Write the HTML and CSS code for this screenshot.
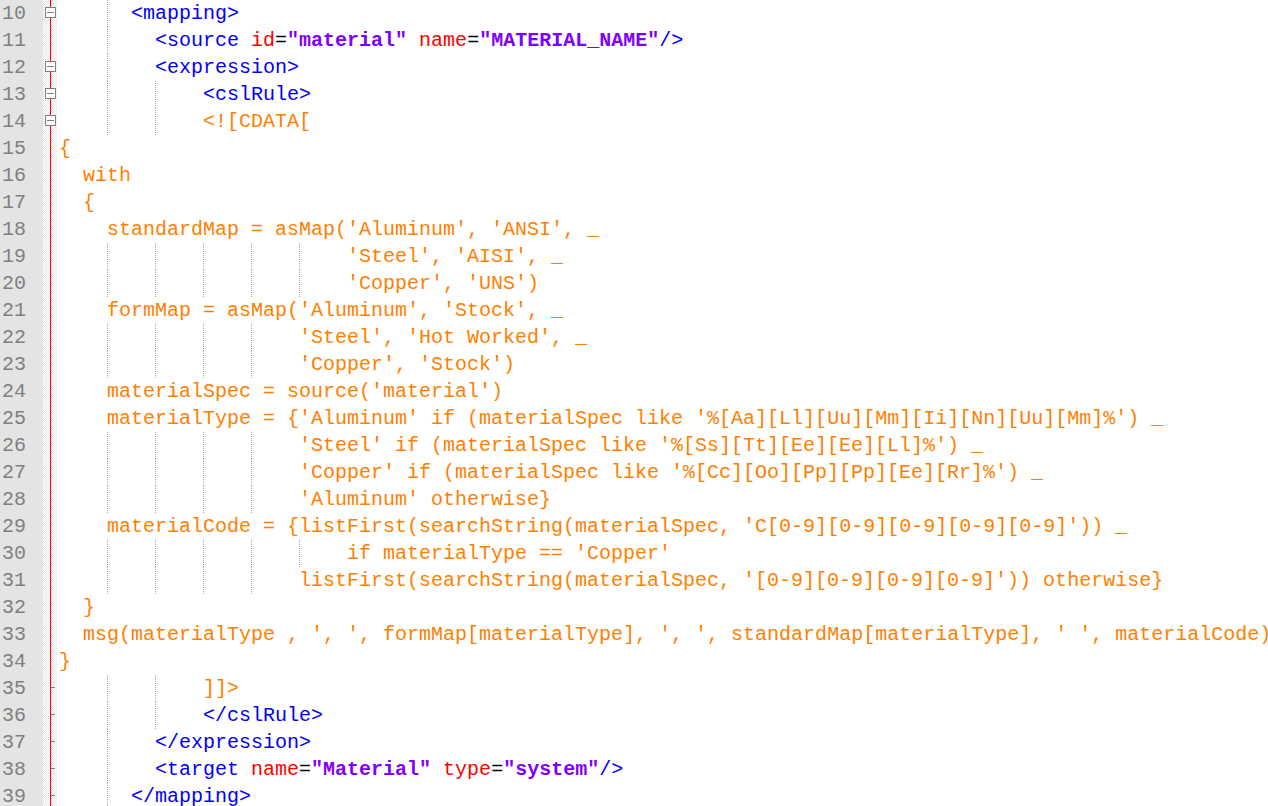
FILE: index.html
```html
<!DOCTYPE html>
<html>
<head>
<meta charset="utf-8">
<link rel="stylesheet" href="styles.css">
</head>
<body>
<div class="editor">
<div class="ln"><span class="num">10</span><span class="fold"><span class="box"></span></span><span class="code"><span class="i"></span><span class="g g2"></span><span class="tag">&lt;mapping&gt;</span></span></div>
<div class="ln"><span class="num">11</span><span class="fold"></span><span class="code"><span class="i"></span><span class="g"></span><span class="tag">&lt;source</span> <span class="attr">id</span>=<span class="val">"material"</span> <span class="attr">name</span>=<span class="val">"MATERIAL_NAME"</span><span class="tag">/&gt;</span></span></div>
<div class="ln"><span class="num">12</span><span class="fold"><span class="box"></span></span><span class="code"><span class="i"></span><span class="g"></span><span class="tag">&lt;expression&gt;</span></span></div>
<div class="ln"><span class="num">13</span><span class="fold"><span class="box"></span></span><span class="code"><span class="i"></span><span class="g"></span><span class="g"></span><span class="tag">&lt;cslRule&gt;</span></span></div>
<div class="ln"><span class="num">14</span><span class="fold"><span class="box"></span></span><span class="code"><span class="i"></span><span class="g"></span><span class="g"></span><span class="cd">&lt;![CDATA[</span></span></div>
<div class="ln"><span class="num">15</span><span class="fold"></span><span class="code cd">{</span></div>
<div class="ln"><span class="num">16</span><span class="fold"></span><span class="code cd">  with</span></div>
<div class="ln"><span class="num">17</span><span class="fold"></span><span class="code cd">  {</span></div>
<div class="ln"><span class="num">18</span><span class="fold"></span><span class="code cd">    standardMap = asMap('Aluminum', 'ANSI', _</span></div>
<div class="ln"><span class="num">19</span><span class="fold"></span><span class="code cd"><span class="i"></span><span class="g"></span><span class="g"></span><span class="g"></span><span class="g"></span><span class="g"></span>'Steel', 'AISI', _</span></div>
<div class="ln"><span class="num">20</span><span class="fold"></span><span class="code cd"><span class="i"></span><span class="g"></span><span class="g"></span><span class="g"></span><span class="g"></span><span class="g"></span>'Copper', 'UNS')</span></div>
<div class="ln"><span class="num">21</span><span class="fold"></span><span class="code cd">    formMap = asMap('Aluminum', 'Stock', _</span></div>
<div class="ln"><span class="num">22</span><span class="fold"></span><span class="code cd"><span class="i"></span><span class="g"></span><span class="g"></span><span class="g"></span><span class="g"></span>'Steel', 'Hot Worked', _</span></div>
<div class="ln"><span class="num">23</span><span class="fold"></span><span class="code cd"><span class="i"></span><span class="g"></span><span class="g"></span><span class="g"></span><span class="g"></span>'Copper', 'Stock')</span></div>
<div class="ln"><span class="num">24</span><span class="fold"></span><span class="code cd">    materialSpec = source('material')</span></div>
<div class="ln"><span class="num">25</span><span class="fold"></span><span class="code cd">    materialType = {'Aluminum' if (materialSpec like '%[Aa][Ll][Uu][Mm][Ii][Nn][Uu][Mm]%') _</span></div>
<div class="ln"><span class="num">26</span><span class="fold"></span><span class="code cd"><span class="i"></span><span class="g"></span><span class="g"></span><span class="g"></span><span class="g"></span>'Steel' if (materialSpec like '%[Ss][Tt][Ee][Ee][Ll]%') _</span></div>
<div class="ln"><span class="num">27</span><span class="fold"></span><span class="code cd"><span class="i"></span><span class="g"></span><span class="g"></span><span class="g"></span><span class="g"></span>'Copper' if (materialSpec like '%[Cc][Oo][Pp][Pp][Ee][Rr]%') _</span></div>
<div class="ln"><span class="num">28</span><span class="fold"></span><span class="code cd"><span class="i"></span><span class="g"></span><span class="g"></span><span class="g"></span><span class="g"></span>'Aluminum' otherwise}</span></div>
<div class="ln"><span class="num">29</span><span class="fold"></span><span class="code cd">    materialCode = {listFirst(searchString(materialSpec, 'C[0-9][0-9][0-9][0-9][0-9]')) _</span></div>
<div class="ln"><span class="num">30</span><span class="fold"></span><span class="code cd"><span class="i"></span><span class="g"></span><span class="g"></span><span class="g"></span><span class="g"></span><span class="g"></span>if materialType == 'Copper'</span></div>
<div class="ln"><span class="num">31</span><span class="fold"></span><span class="code cd"><span class="i"></span><span class="g"></span><span class="g"></span><span class="g"></span><span class="g"></span>listFirst(searchString(materialSpec, '[0-9][0-9][0-9][0-9]')) otherwise}</span></div>
<div class="ln"><span class="num">32</span><span class="fold"></span><span class="code cd">  }</span></div>
<div class="ln"><span class="num">33</span><span class="fold"></span><span class="code cd">  msg(materialType , ', ', formMap[materialType], ', ', standardMap[materialType], ' ', materialCode)</span></div>
<div class="ln"><span class="num">34</span><span class="fold"></span><span class="code cd">}</span></div>
<div class="ln"><span class="num">35</span><span class="fold"><span class="tick"></span></span><span class="code"><span class="i"></span><span class="g"></span><span class="g"></span><span class="cd">]]&gt;</span></span></div>
<div class="ln"><span class="num">36</span><span class="fold"><span class="tick"></span></span><span class="code"><span class="i"></span><span class="g"></span><span class="g"></span><span class="tag">&lt;/cslRule&gt;</span></span></div>
<div class="ln"><span class="num">37</span><span class="fold"><span class="tick"></span></span><span class="code"><span class="i"></span><span class="g"></span><span class="tag">&lt;/expression&gt;</span></span></div>
<div class="ln"><span class="num">38</span><span class="fold"><span class="tick"></span></span><span class="code"><span class="i"></span><span class="g"></span><span class="tag">&lt;target</span> <span class="attr">name</span>=<span class="val">"Material"</span> <span class="attr">type</span>=<span class="val">"system"</span><span class="tag">/&gt;</span></span></div>
<div class="ln"><span class="num">39</span><span class="fold"><span class="tick"></span></span><span class="code"><span class="i"></span><span class="g g2"></span><span class="tag">&lt;/mapping&gt;</span></span></div>
</div>
</body>
</html>
```

FILE: styles.css
```css
html, body {
  margin: 0;
  padding: 0;
  background: #ffffff;
  overflow: hidden;
}

.editor {
  width: 1268px;
  height: 806px;
  overflow: hidden;
  font-family: "Liberation Mono", "Courier New", monospace;
  font-size: 20px;
  line-height: 27px;
}

.ln {
  display: flex;
  height: 27px;
  white-space: pre;
}

.num {
  flex: 0 0 43px;
  box-sizing: border-box;
  padding-left: 2px;
  background: #e4e4e4;
  color: #808080;
}

.fold {
  flex: 0 0 14px;
  display: flex;
  flex-direction: column;
  align-items: flex-start;
  background:
    linear-gradient(#ff0000, #ff0000) no-repeat 7px 0 / 1px 100%,
    repeating-conic-gradient(#e6e6e6 0 25%, #ffffff 0 50%) 0 0 / 2px 2px;
}

.box {
  margin: 7px 0 0 2px;
  width: 11px;
  height: 11px;
  box-sizing: border-box;
  border: 1px solid #808080;
  background: linear-gradient(#808080, #808080) no-repeat center / 7px 1px, #ffffff;
}

.tick {
  margin: 12px 0 0 8px;
  width: 4px;
  height: 1px;
  background: #808080;
}

.code {
  flex: 1 1 auto;
  padding-left: 2px;
  color: #000000;
}

.i, .g {
  display: inline-block;
  width: 4ch;
  height: 27px;
  vertical-align: top;
}

.g {
  background: repeating-linear-gradient(#a0a0a0 0 1px, transparent 1px 2px) no-repeat 0 0 / 1px 100%;
}

.g2 {
  width: 2ch;
}

.tag { color: #0000ff; }
.attr { color: #ff0000; }
.val { color: #8000ff; font-weight: bold; }
.cd { color: #ff8000; }
```
